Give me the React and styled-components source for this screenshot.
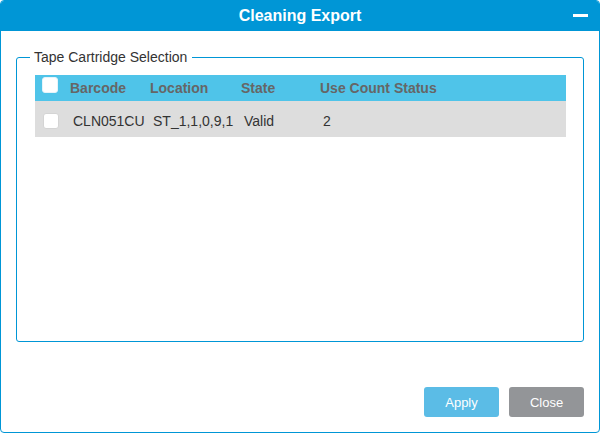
import React from 'react';
import styled, { createGlobalStyle } from 'styled-components';

const GlobalStyle = createGlobalStyle`
  html, body {
    margin: 0;
    padding: 0;
    background: #ffffff;
  }
  body {
    font-family: "Liberation Sans", Arial, sans-serif;
  }
`;

const Window = styled.div`
  box-sizing: border-box;
  width: 600px;
  height: 433px;
  display: flex;
  flex-direction: column;
  background: #ffffff;
  border: 1px solid #0096d6;
  border-radius: 4px;
  overflow: hidden;
`;

const TitleBar = styled.div`
  height: 30px;
  display: grid;
  grid-template-columns: 1fr auto 1fr;
  align-items: center;
  background: #0096d6;
  color: #ffffff;
`;

const Title = styled.h1`
  grid-column: 2;
  margin: 0;
  font-size: 16px;
  font-weight: bold;
  line-height: 30px;
`;

const MinimizeButton = styled.button`
  grid-column: 3;
  justify-self: end;
  align-self: start;
  width: 15px;
  height: 3px;
  margin: 13px 11px 0 0;
  padding: 0;
  border: none;
  background: #ffffff;
  cursor: pointer;
`;

const Fieldset = styled.fieldset`
  margin: 18px 15px 0 15px;
  padding: 10px 17px 0 18px;
  border: 1px solid #0096d6;
  border-radius: 3px;
`;

const Legend = styled.legend`
  margin-left: -5px;
  padding: 0 5px 0 4px;
  font-size: 14px;
  line-height: 16px;
  color: #333333;
`;

const TableArea = styled.div`
  height: 266px;
`;

const columns = '35px 80px 91px 79px 1fr';

const HeaderRow = styled.div`
  display: grid;
  grid-template-columns: ${columns};
  height: 26px;
  background: #4fc4e9;
  color: #666666;
  font-size: 14px;
  font-weight: bold;
`;

const HeaderCell = styled.div`
  display: flex;
  align-items: center;
`;

const DataRow = styled.div`
  display: grid;
  grid-template-columns: ${columns};
  height: 36px;
  background: #dddddd;
  color: #333333;
  font-size: 14px;
`;

const DataCell = styled.div`
  display: flex;
  align-items: center;
  padding: 3px 0 0 3px;
`;

const Checkbox = styled.span`
  box-sizing: border-box;
  display: block;
  width: 16px;
  height: 16px;
  margin: ${({ $header }) => ($header ? '2px 0 0 7px' : '12px 0 0 8px')};
  background: #ffffff;
  border: 1px solid ${({ $header }) => ($header ? '#e6f4fa' : '#d4d4d4')};
  border-radius: 3px;
`;

const Footer = styled.div`
  margin-top: auto;
  display: flex;
  justify-content: flex-end;
  gap: 10px;
  padding: 0 15px 15px 0;
`;

const Button = styled.button`
  width: 75px;
  height: 30px;
  padding: 0;
  border: none;
  border-radius: 3px;
  background: ${({ $variant }) => ($variant === 'primary' ? '#5bbce6' : '#939598')};
  color: #ffffff;
  font-family: "Liberation Sans", Arial, sans-serif;
  font-size: 13px;
  cursor: pointer;
`;

const cartridges = [
  { barcode: 'CLN051CU', location: 'ST_1,1,0,9,1', state: 'Valid', useCount: '2', status: '' }
];

export default function App() {
  return (
    <>
      <GlobalStyle />
      <Window>
        <TitleBar>
          <Title>Cleaning Export</Title>
          <MinimizeButton aria-label="Minimize" />
        </TitleBar>

        <Fieldset>
          <Legend>Tape Cartridge Selection</Legend>
          <TableArea>
            <HeaderRow>
              <div>
                <Checkbox $header />
              </div>
              <HeaderCell>Barcode</HeaderCell>
              <HeaderCell>Location</HeaderCell>
              <HeaderCell>State</HeaderCell>
              <HeaderCell>Use Count Status</HeaderCell>
            </HeaderRow>
            {cartridges.map((c) => (
              <DataRow key={c.barcode}>
                <div>
                  <Checkbox />
                </div>
                <DataCell>{c.barcode}</DataCell>
                <DataCell>{c.location}</DataCell>
                <DataCell>{c.state}</DataCell>
                <DataCell>{c.useCount}</DataCell>
              </DataRow>
            ))}
          </TableArea>
        </Fieldset>

        <Footer>
          <Button $variant="primary">Apply</Button>
          <Button>Close</Button>
        </Footer>
      </Window>
    </>
  );
}
